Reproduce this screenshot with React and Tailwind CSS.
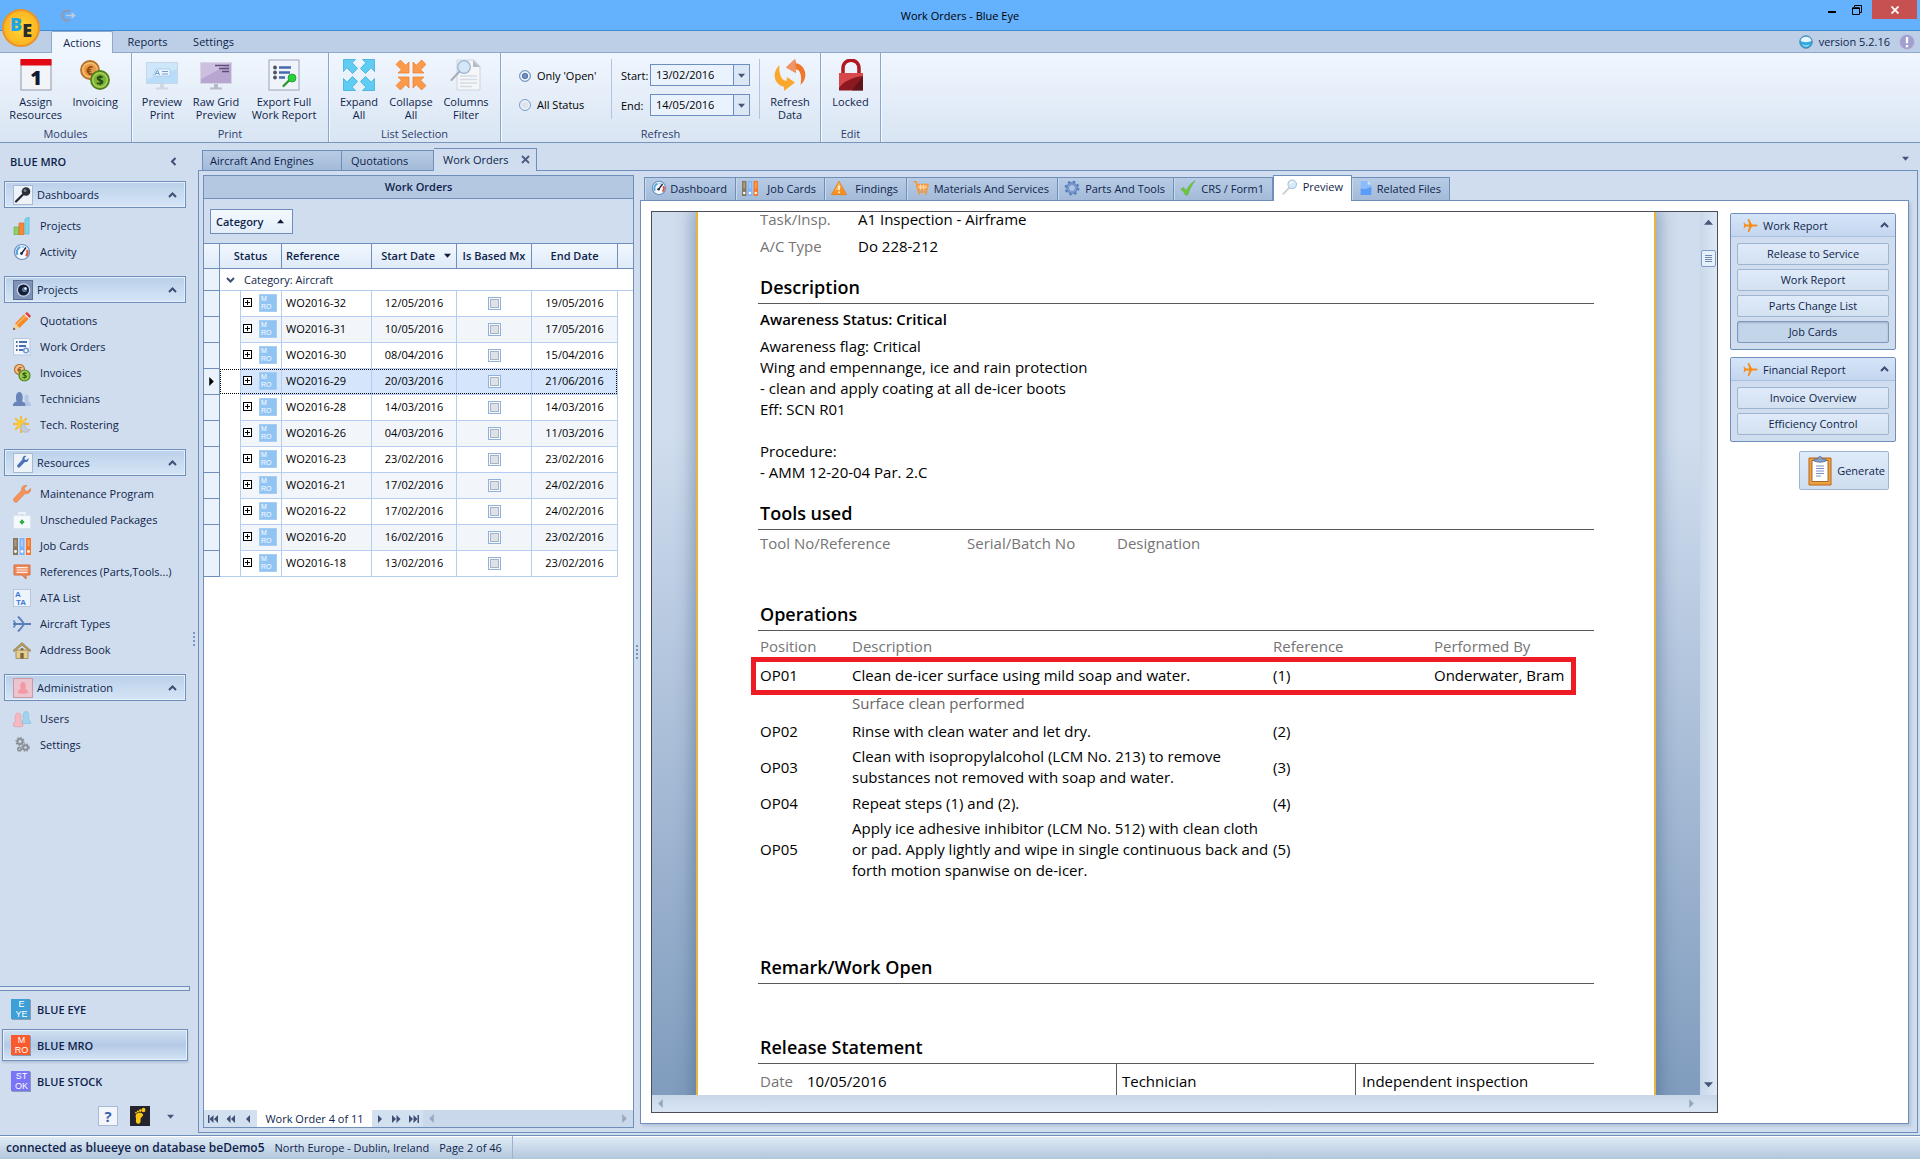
import React from "react";

/* ---------- small glyphs ---------- */

const ChevUp = () => (
  <svg width="9" height="6" viewBox="0 0 9 6" fill="none" stroke="#3f4f74" strokeWidth="2"><path d="M1 5l3.500-3.500L8 5" /></svg>
);
const ChevDown = () => (
  <svg width="9" height="6" viewBox="0 0 9 6" fill="none" stroke="#3f4f74" strokeWidth="2"><path d="M1 1l3.500 3.500L8 1" /></svg>
);
const ChevLeft = () => (
  <svg width="7" height="9" viewBox="0 0 7 9" fill="none" stroke="#3f4f74" strokeWidth="2"><path d="M5.500 1L2 4.500 5.500 8" /></svg>
);
const Tri = ({ dir = "down", color = "#46557a", size = 7 }) => {
  const d = { down: "M0 2h8L4 6.500z", up: "M0 6h8L4 1.500z", left: "M6 0v8L2 4z", right: "M2 0v8l4-4z" }[dir];
  return <svg width={size} height={size} viewBox="0 0 8 8"><path d={d} fill={color} /></svg>;
};

const Plane = ({ className }) => (
  <svg className={className} viewBox="0 0 16 16" fill="#f98b13">
    <path d="M15.500 8c0 .7-1 1.100-2 1.100h-4L6.500 15H5l1.600-5.900H3L1.500 11H.5l.8-3L.5 5h1L3 6.900h3.600L5 1h1.500l3 5.900h4c1 0 2 .4 2 1.100z" />
  </svg>
);

/* ---------- 18px icons ---------- */

const icons = {
  chart: (
    <g>
      <path d="M1 10h5v8H1z" fill="#8ed06a" stroke="#5cab3b" strokeWidth=".6" />
      <path d="M6 6h5v12H6z" fill="#f5873d" stroke="#d9661c" strokeWidth=".6" />
      <path d="M12 2l4-2v17h-4z" fill="#7fd6ea" stroke="#3fb0cc" strokeWidth=".6" />
    </g>
  ),
  gauge: (
    <g>
      <circle cx="9" cy="9" r="7.500" fill="#f7fbff" stroke="#6a8fc0" strokeWidth="1.200" />
      <path d="M4.500 12a5.500 5.500 0 0 1 3-8" fill="none" stroke="#5aa6dc" strokeWidth="2.200" />
      <path d="M8.500 3.700a5.500 5.500 0 0 1 3 .6" fill="none" stroke="#9fd0f0" strokeWidth="2" />
      <path d="M14 7a5.500 5.500 0 0 1-1 6" fill="none" stroke="#e0563d" strokeWidth="2.200" />
      <path d="M8.500 10.500L13 4.500" stroke="#222b40" strokeWidth="1.600" />
      <circle cx="8.500" cy="10.500" r="1.400" fill="#222b40" />
    </g>
  ),
  pencil: (
    <g>
      <path d="M2 11.500L11.500 2l4.500 4.500L6.500 16z" fill="#f68a24" />
      <path d="M3.500 13L13 3.500" stroke="#fbb56b" strokeWidth="1.500" />
      <path d="M12 1.500L14 0l4 4-1.500 2z" fill="#e2383c" />
      <path d="M11 2.500l1-1 4.500 4.500-1 1z" fill="#e8dcd0" />
      <path d="M2 11.500L0 18l6.500-2z" fill="#f3cf9b" />
      <path d="M.7 15.500L0 18l2.500-.8z" fill="#3a3a3a" />
    </g>
  ),
  orders: (
    <g>
      <rect x=".5" y=".5" width="16.500" height="16.500" fill="#f2f7fd" stroke="#b8c7db" />
      <path d="M3 4h1.500M3 8h1.500M3 12h1.500" stroke="#5b6478" strokeWidth="1.800" />
      <path d="M6 4h8M6 8h7M6 12h4" stroke="#4a6fae" strokeWidth="1.800" />
      <circle cx="13" cy="12.500" r="2.300" fill="#fff" stroke="#6d97d6" strokeWidth="1.500" />
    </g>
  ),
  coins: (
    <g>
      <circle cx="6.500" cy="5.500" r="5" fill="#f0c390" stroke="#b97432" strokeWidth="1.200" />
      <text x="6.500" y="8.500" fontSize="8" fontWeight="700" textAnchor="middle" fill="#a05a1c">€</text>
      <circle cx="11.500" cy="11.500" r="5.500" fill="#9ccb4c" stroke="#4f8222" strokeWidth="1.200" />
      <text x="11.500" y="14.800" fontSize="9" fontWeight="700" textAnchor="middle" fill="#2f5a12">$</text>
    </g>
  ),
  people: (
    <g>
      <path d="M10 16c0-3.500 1-3.800 2.300-4.500C11 9 11 4.500 13.500 4.500S16 9 15 11.500c1.500.7 3 1 3 4.500z" fill="#b3c6e6" />
      <path d="M0 16c0-3 1-3.500 3.700-4.500C2.500 9 2.500 2 6.300 2s4 7 2.700 9.500c2.500 1 3.500 1.500 3.500 4.500z" fill="#6a84b8" />
    </g>
  ),
  roster: (
    <g>
      <g stroke="#f5b921" strokeWidth="1.800"><path d="M8 0v3.500M8 12.500V17M0 8h4M2.300 2.300L5 5M2.300 13.700L5 11M13.700 2.300L11.500 4.500M12 8h4" /></g>
      <circle cx="8" cy="8" r="4.500" fill="#fdc93a" />
      <path d="M12.500 6.500c-1.500 3-.2 6.500 4.500 7.300-2.500 3.400-8 3.200-9.300-.8 0-2.800 1.800-6 4.800-6.500z" fill="#c4cbd8" stroke="#a1a9b8" strokeWidth=".6" />
    </g>
  ),
  wrench: (
    <path d="M17.500 3.500l-3 2.800-2.600-.6-.6-2.500L14 .4c-3-.8-6 1.600-5.400 5L1 13.500c-1.500 1.800 1 5 3.200 3.300l7.800-8.200c3.300.8 6.200-1.600 5.500-5.100z" fill="#f6935b" stroke="#dd7438" strokeWidth=".6" />
  ),
  aid: (
    <g>
      <path d="M6 4.500V2h6v2.500" fill="none" stroke="#eef2f7" strokeWidth="1.800" />
      <rect x=".5" y="4.500" width="17" height="13" rx="1" fill="#f5f8fc" stroke="#dbe3ee" />
      <path d="M9 8.800v4.400M6.800 11h4.400" stroke="#2bb04a" strokeWidth="2.200" />
    </g>
  ),
  cards: (
    <g>
      <path d="M0 1h5v17H0z" fill="#86775f" /><path d="M1.500 2.500h2v7h-2z" fill="#ab9c82" />
      <path d="M6.500 1h5v17h-5z" fill="#7fb3fa" /><path d="M8 2.500h2v7H8z" fill="#a8ccfd" />
      <path d="M13 1h5v17h-5z" fill="#f4782c" /><path d="M14.500 2.500h2v7h-2z" fill="#f9a25c" />
      <g fill="#fff"><circle cx="2.500" cy="14.500" r="1.400" /><circle cx="9" cy="14.500" r="1.400" /><circle cx="15.500" cy="14.500" r="1.400" /></g>
    </g>
  ),
  speech: (
    <g>
      <path d="M1 2h16v10h-4v4l-4-4H1z" fill="#ee8a5c" stroke="#d96d3c" />
      <path d="M3.500 4.700h11M3.500 7h11M3.500 9.300h11" stroke="#fdeee5" strokeWidth="1.200" />
    </g>
  ),
  ata: (
    <g>
      <rect x=".5" y=".5" width="17" height="17" fill="#eef4fb" stroke="#b8c7db" />
      <g fontSize="8" fontWeight="700" fill="#3b78d8" fontFamily="Liberation Sans, sans-serif"><text x="2" y="7.500">A</text><text x="3" y="16">TA</text></g>
    </g>
  ),
  jet: (
    <g fill="none" stroke="#5b7fbd">
      <path d="M0 9h18" strokeWidth="2" />
      <path d="M5 1.500c1 1 4.500 5 6 7.500-1.500 2.500-5 6.500-6 7.500" strokeWidth="1.800" />
      <path d="M.5 5.500L3 9 .5 12.500" strokeWidth="1.500" />
    </g>
  ),
  house: (
    <g>
      <path d="M3 9h12v8.500H3z" fill="#e3cd8f" stroke="#9b8350" strokeWidth=".8" />
      <path d="M0 9.500L9 1.500l9 8-1.200 1L9 4.200 1.200 10.500z" fill="#b79c5e" stroke="#8d7541" strokeWidth=".6" />
      <path d="M7.300 12h3.400v5.500H7.300z" fill="#7e6636" />
      <circle cx="9" cy="8.300" r="1.500" fill="#8d7541" />
    </g>
  ),
  users: (
    <g>
      <path d="M9 13.500c0-3 .8-3.500 2-4.500-1.500-2.500-1-7.500 2-7.500s3.500 5 2 7.500c1.700.8 2.500 1.500 2.500 4.500z" fill="#9fd3ee" stroke="#7bbbdc" strokeWidth=".6" />
      <path d="M.5 16c0-3 .8-3.800 2.300-4.800C1.300 8.500 2 3 5 3s4 5.500 2.500 8.200c1.700 1 2.500 1.800 2.500 4.800-2 1.200-7.500 1.200-9.500 0z" fill="#f6b9c0" stroke="#e295a0" strokeWidth=".6" />
    </g>
  ),
  gears: (
    <g fill="none" stroke="#8b8f96">
      <circle cx="7" cy="5.500" r="2.600" strokeWidth="2" /><circle cx="7" cy="5.500" r="4" strokeWidth="1.300" strokeDasharray="1.500 1.600" />
      <circle cx="6.500" cy="13" r="1.700" strokeWidth="1.700" />
      <circle cx="12.500" cy="11.500" r="2.300" strokeWidth="2" /><circle cx="12.500" cy="11.500" r="3.600" strokeWidth="1.300" strokeDasharray="1.500 1.400" />
    </g>
  ),
  warning: (
    <g>
      <path d="M9 1.500L17.500 16.500H.5z" fill="#f7901e" stroke="#e27a10" strokeWidth=".8" strokeLinejoin="round" />
      <path d="M9 2.500l3 6-8 4.500z" fill="#fbb25a" />
      <path d="M9 6.500v5M9 13v1.800" stroke="#fff4e0" strokeWidth="1.800" />
    </g>
  ),
  cart: (
    <g fill="none" stroke="#f3973a" strokeWidth="1.500">
      <path d="M.5 2h3l2.500 11.500h10.500" />
      <path d="M4.500 5H17l-1.300 6H5.700z" fill="#f7b268" />
      <path d="M6 8h10M8.500 5v6M12 5v6" stroke="#fde0bd" strokeWidth="1" />
      <path d="M6.500 15.800h1.500M13.500 15.800H15" strokeWidth="2.200" />
    </g>
  ),
  cog: (
    <g fill="none" stroke="#5578b8">
      <circle cx="9" cy="9" r="7" strokeWidth="2.600" strokeDasharray="2.700 2.800" />
      <circle cx="9" cy="9" r="4.800" strokeWidth="3.200" stroke="#7a9ad2" />
      <circle cx="9" cy="9" r="6" strokeWidth=".8" />
    </g>
  ),
  check: <path d="M1 10.500l3-2 3 3.500C9.500 7 13 3 17 .8 13.500 5 10.500 10.500 8.500 17h-2.300C5 14.500 3.300 12 1 10.500z" fill="#6fc63a" stroke="#4fa322" strokeWidth=".5" />,
  lens: (
    <g>
      <path d="M1.500 16.800L8.500 9.500" stroke="#c9cdd4" strokeWidth="2" strokeLinecap="round" />
      <circle cx="11.500" cy="6" r="4.800" fill="#d7ebf9" stroke="#a9c3dc" strokeWidth="1.200" />
      <path d="M9 5.500c.3-1.500 1.500-2.300 3-2.300" stroke="#fff" strokeWidth="1.200" fill="none" />
    </g>
  ),
  file: (
    <g>
      <path d="M3 1h8l4 4v12H3z" fill="#8cbcfb" />
      <path d="M11 1l4 4h-4z" fill="#d3e5fd" />
      <path d="M3 9.500l5 1 7-3V17H3z" fill="#5a9cf8" />
    </g>
  ),
  ball: (
    <g>
      <circle cx="9" cy="9" r="8" fill="#35a9dd" stroke="#3f6f9d" strokeWidth="1" />
      <path d="M2 7.500c1-7 13-7 14 0-3 2.500-11 2.500-14 0z" fill="#e4f5fc" />
      <path d="M4 12c2 4 8 4 10 0-3 1.500-7 1.500-10 0z" fill="#8fe3f7" />
    </g>
  ),
  bang: (
    <g>
      <circle cx="9" cy="9" r="8.500" fill="#a09fd0" stroke="#c3c6e2" />
      <path d="M9 3.500v7M9 12.500v2.500" stroke="#fff" strokeWidth="2.600" />
    </g>
  ),
};
const Icon = ({ name, className = "size-[18px]" }) => (
  <svg className={className + " shrink-0"} viewBox="0 0 18 18" aria-hidden="true">{icons[name]}</svg>
);

/* ---------- 20px framed icons for the navigation headings ---------- */

const Framed = ({ dark, pink, children }) => (
  <svg className="size-5 shrink-0" viewBox="0 0 20 20" aria-hidden="true">
    <rect x=".5" y=".5" width="19" height="19" fill={dark ? "#7f93b8" : pink ? "#edc3cd" : "#eef3fa"} stroke={dark ? "#5c6f93" : pink ? "#c898a6" : "#a9b9cf"} />
    {children}
  </svg>
);
const headIcons = {
  Dashboards: (
    <Framed>
      <path d="M3 16.500l7-7" stroke="#20242c" strokeWidth="2.200" strokeLinecap="round" />
      <circle cx="13" cy="6.500" r="4.300" fill="#2a2f3a" /><circle cx="12" cy="5.500" r="1.500" fill="#78808f" />
    </Framed>
  ),
  Projects: (
    <Framed dark>
      <circle cx="10.500" cy="10" r="6.800" fill="#c9d6ea" /><circle cx="10.500" cy="10" r="5.500" fill="#141d33" />
      <circle cx="11.500" cy="9.500" r="2.600" fill="#54709f" /><circle cx="12.500" cy="8.500" r="1.200" fill="#fff" />
    </Framed>
  ),
  Resources: (
    <Framed>
      <path d="M15.500 5l-2 2-1.700-.4-.4-1.700 2-1.900c-2.300-.6-4.400 1-4 3.600L4.500 12c-1.200 1.500.8 3.500 2.300 2.300l5.100-5.200c2.300.6 4.200-1.500 3.600-4.100z" fill="#4a72b8" />
    </Framed>
  ),
  Administration: (
    <Framed pink>
      <path d="M5 15c0-3 1.500-3.500 3-4.200C6.500 8.500 7 4 10 4s3.500 4.500 2 6.800c1.500.7 3 1.200 3 4.200-2.500 1-7.500 1-10 0z" fill="#f29aa4" />
    </Framed>
  ),
};

/* ---------- 32px ribbon icons ---------- */

const Arrows = ({ fill, stroke, inward }) => {
  const out = "M.5 .5h12l-3.300 3.300L14.500 9.500l-5 5-5.700-5.700L.5 12.500z";
  const inn = "M14 14H3l3.300-3.300L1 5.400 5.400 1l5.300 5.300L14 3z";
  const p = inward ? inn : out;
  return (
    <g fill={fill} stroke={stroke} strokeWidth=".7">
      <path d={p} /><path d={p} transform="translate(32 0) scale(-1 1)" />
      <path d={p} transform="translate(0 32) scale(1 -1)" /><path d={p} transform="translate(32 32) scale(-1 -1)" />
    </g>
  );
};
const big = {
  calendar: (
    <g>
      <rect x="1" y="1" width="30" height="30" fill="#f3f4f8" stroke="#8e97a8" />
      <path d="M.5 0h31v6.500H.500z" fill="#e30613" />
      <text x="16" y="25.500" fontSize="20" fontWeight="800" textAnchor="middle" fill="#111a2e">1</text>
    </g>
  ),
  coins: (
    <g>
      <circle cx="11" cy="11" r="9" fill="#f3bd6e" stroke="#b66f26" strokeWidth="1.800" />
      <circle cx="11" cy="11" r="6.300" fill="#e89a47" />
      <text x="10.500" y="15.500" fontSize="12" fontWeight="700" textAnchor="middle" fill="#8c4a12">€</text>
      <circle cx="21" cy="21" r="9" fill="#a8d052" stroke="#527f1e" strokeWidth="1.800" />
      <circle cx="21" cy="21" r="6.300" fill="#79b13a" />
      <text x="21" y="26" fontSize="13" fontWeight="700" textAnchor="middle" fill="#1f4a10">$</text>
    </g>
  ),
  preview: (
    <g>
      <rect x=".5" y="3.500" width="31" height="21" fill="#b9dcf8" stroke="#c6d7ea" />
      <path d="M1 4h30v6L1 20z" fill="#cfe7fb" />
      <path d="M7 17l3-7h14v7z" fill="#eef6fd" stroke="#a5c6e6" strokeWidth=".8" />
      <path d="M9 16l2.500-5 2 5M9.700 14.500h3.300M16 12.500h6M16 15h6" stroke="#6a9ed2" fill="none" />
      <path d="M14 25h4v3.500h-4zM10 28.500h12v2H10z" fill="#d3d6de" />
    </g>
  ),
  raw: (
    <g>
      <rect x=".5" y="3.500" width="31" height="21" fill="#b9a6d0" stroke="#d5d6e4" />
      <path d="M1 4h30L1 20z" fill="#cdbfe0" />
      <path d="M15 6.500h14M19 9.500h10M22 12.500h7" stroke="#5f4d78" strokeWidth="1.600" />
      <path d="M14 25h4v3.500h-4zM10 28.500h12v2H10z" fill="#b9bcc6" />
    </g>
  ),
  exportList: (
    <g>
      <rect x="1" y="1" width="30" height="30" fill="#f0f3f9" stroke="#99a5b8" />
      <g fill="#4c5264"><circle cx="7" cy="8.500" r="1.900" /><circle cx="7" cy="13.500" r="1.900" /><circle cx="7" cy="18.500" r="1.900" /></g>
      <path d="M11 8.500h12M11 13.500h11M11 18.500h6" stroke="#4669ad" strokeWidth="2.600" />
      <path d="M15.500 27l6-6" stroke="#23942b" strokeWidth="2.200" strokeLinecap="round" />
      <circle cx="24" cy="19" r="4" fill="#28d13a" stroke="#1a9a28" strokeWidth=".8" />
    </g>
  ),
  expand: <Arrows fill="#5fcdf3" stroke="#2ea6d6" />,
  collapse: <Arrows fill="#fb9a4b" stroke="#ec7a26" inward />,
  filter: (
    <g>
      <path d="M7 1h17l6 6v24H7z" fill="#f4f6f9" stroke="#cdd4de" />
      <path d="M23 1l7 7h-7z" fill="#b5bcc8" />
      <path d="M10 17h17M10 20.500h17M10 24h17M10 27.500h12" stroke="#d5dbe4" strokeWidth="1.400" />
      <circle cx="14" cy="8" r="6.300" fill="#d3e7f8" stroke="#9fb6cf" strokeWidth="1.300" />
      <path d="M9.500 12.500L1.500 21" stroke="#a9adb6" strokeWidth="2" strokeLinecap="round" />
    </g>
  ),
  refresh: (
    <g>
      <path d="M5.500 6C-1 12-1 21 5.500 26c1.500 1 3 1.500 4.500 1.700V32l11-8.500L13 18l-.5 4C7 21 4.500 14 5.500 6z" fill="#fba62c" />
      <path d="M26.500 26C33 20 33 11 26.500 6 25 5 23.500 4.500 22 4.300L21 0 12 8.500l10 5.500-.5-4c5.500 1 6.500 8 5 16z" fill="#f2762a" />
      <path d="M21 0l-9 8.500L22 14l-.2-4.200z" fill="#ee9468" />
    </g>
  ),
  lock: (
    <g>
      <path d="M8 15V9.500C8 -1.500 24 -1.500 24 9.500V15" fill="none" stroke="#b0171f" strokeWidth="3.500" />
      <path d="M4 14h24v17.500H4z" fill="#8d1920" />
      <path d="M4 14h24v3C17 18 8 23 4 29z" fill="#d8474b" />
      <path d="M17 31.500h11V17c-4 6-8 10-11 14.500z" fill="#4f1214" opacity=".7" />
    </g>
  ),
};
const BigIcon = ({ name }) => <svg className="size-8" viewBox="0 0 32 32" aria-hidden="true">{big[name]}</svg>;

/* ---------- ribbon ---------- */

const RibbonButton = ({ icon, lines, width }) => (
  <button className={"flex flex-col items-center gap-1 " + width}>
    <BigIcon name={icon} />
    <span className="block text-center">{lines.map((l) => <span className="block whitespace-nowrap" key={l}>{l}</span>)}</span>
  </button>
);
const RibbonGroup = ({ title, className, children }) => (
  <section className={"flex shrink-0 flex-col border-r border-[#8aa6cc] pt-[6px] shadow-[1px_0_0_#f5f9fe] " + className}>
    <div className="flex h-[68px] items-start">{children}</div>
    <h2 className="text-center text-[#2b3d6b]">{title}</h2>
  </section>
);
const Radio = ({ label, on }) => (
  <label className="flex items-center gap-[6px] whitespace-nowrap text-black">
    <input
      type="radio" name="status" defaultChecked={on}
      className="size-3 appearance-none rounded-full border border-[#7f9cc6] bg-[#dfe3e8] shadow-[inset_0_0_0_2px_#e6f0fb] checked:bg-[#7795c4] checked:shadow-[inset_0_0_0_2px_#e6f0fb,inset_0_0_0_3px_#4a6a9f]"
    />
    {label}
  </label>
);
const DateField = ({ id, label, value }) => (
  <div className="flex items-center">
    <label htmlFor={id} className="w-[29px] text-black">{label}</label>
    <div className="flex h-[22px] w-[100px] border border-[#6c8fc0] bg-[#eaf3fd]">
      <input id={id} defaultValue={value} className="w-0 flex-1 pb-[2px] pl-[5px] text-black outline-none" />
      <button aria-label={label + " calendar"} className="flex w-4 items-center justify-center border-l border-[#6c8fc0] bg-[#dbe7f5]"><Tri /></button>
    </div>
  </div>
);

function Ribbon() {
  return (
    <div className="flex h-[90px] border-b border-[#7794bd] bg-linear-to-b from-[#f0f6fe] to-[#d9e5f3] leading-[13px]">
      <RibbonGroup title="Modules" className="w-[132px] px-[6px]">
        <RibbonButton icon="calendar" lines={["Assign", "Resources"]} width="w-[60px]" />
        <RibbonButton icon="coins" lines={["Invoicing"]} width="w-[60px]" />
      </RibbonGroup>
      <RibbonGroup title="Print" className="w-[197px] px-[3px]">
        <RibbonButton icon="preview" lines={["Preview", "Print"]} width="w-[54px]" />
        <RibbonButton icon="raw" lines={["Raw Grid", "Preview"]} width="w-[54px]" />
        <RibbonButton icon="exportList" lines={["Export Full", "Work Report"]} width="w-[82px]" />
      </RibbonGroup>
      <RibbonGroup title="List Selection" className="w-[172px] px-1">
        <RibbonButton icon="expand" lines={["Expand", "All"]} width="w-[52px]" />
        <RibbonButton icon="collapse" lines={["Collapse", "All"]} width="w-[52px]" />
        <RibbonButton icon="filter" lines={["Columns", "Filter"]} width="w-[58px]" />
      </RibbonGroup>
      <RibbonGroup title="Refresh" className="w-[320px]">
        <div className="flex h-[60px] w-[111px] flex-col gap-4 border-r border-[#b3c5de] pt-[10px] pl-[18px]">
          <Radio label="Only 'Open'" on />
          <Radio label="All Status" />
        </div>
        <div className="flex h-[60px] w-[148px] flex-col gap-2 border-r border-[#b3c5de] pt-[5px] pl-[9px]">
          <DateField id="start" label="Start:" value="13/02/2016" />
          <DateField id="end" label="End:" value="14/05/2016" />
        </div>
        <RibbonButton icon="refresh" lines={["Refresh", "Data"]} width="w-[60px]" />
      </RibbonGroup>
      <RibbonGroup title="Edit" className="w-[60px]">
        <RibbonButton icon="lock" lines={["Locked"]} width="w-[59px]" />
      </RibbonGroup>
    </div>
  );
}

/* ---------- navigation ---------- */

const nav = [
  ["Dashboards", [["chart", "Projects"], ["gauge", "Activity"]]],
  ["Projects", [["pencil", "Quotations"], ["orders", "Work Orders"], ["coins", "Invoices"], ["people", "Technicians"], ["roster", "Tech. Rostering"]]],
  ["Resources", [["wrench", "Maintenance Program"], ["aid", "Unscheduled Packages"], ["cards", "Job Cards"], ["speech", "References (Parts,Tools...)"], ["ata", "ATA List"], ["jet", "Aircraft Types"], ["house", "Address Book"]]],
  ["Administration", [["users", "Users"], ["gears", "Settings"]]],
];

const ModuleTile = ({ a, b, color }) => (
  <span className={"flex h-5 w-[19px] flex-col pl-[2px] font-['Liberation_Sans',sans-serif] text-[9px] leading-[10px] font-normal text-white shadow-[1px_1px_0_#8a9bb5] " + color}>
    <span>{a}</span><span>{b}</span>
  </span>
);
const ModuleButton = ({ a, b, color, label, active }) => (
  <button className={"mx-[2px] flex h-8 items-center gap-[7px] border pl-2 font-semibold " + (active ? "border-[#6f8fba] bg-linear-to-b from-[#cfe0f2] via-[#b4cae5] to-[#d3e4f5] shadow-[inset_0_0_0_1px_#e6f1fb,0_2px_2px_#b4c4da]" : "border-transparent")}>
    <ModuleTile a={a} b={b} color={color} />{label}
  </button>
);

const Dots = () => (
  <div className="flex flex-col gap-[2px]">
    {[0, 1, 2, 3].map((i) => <span key={i} className="size-[2px] bg-[#7d95ba]" />)}
  </div>
);

function Sidebar() {
  return (
    <aside className="flex w-[190px] shrink-0 flex-col">
      <div className="flex h-[38px] items-center justify-between pr-[13px] pb-[2px] pl-[10px] font-semibold">
        BLUE MRO
        <button aria-label="Collapse navigation"><ChevLeft /></button>
      </div>
      <nav className="flex-1 overflow-hidden">
        {nav.map(([title, items]) => (
          <section key={title} className="pb-[11px]">
            <button className="ml-1 flex h-[27px] w-[182px] items-center gap-1 border border-[#6f8fba] bg-linear-to-b from-[#bad0e9] to-[#d5e5f6] pr-2 pl-2 shadow-[inset_0_0_0_1px_#e4effa]">
              {headIcons[title]}
              <span className="flex-1 text-left">{title}</span>
              <ChevUp />
            </button>
            <ul className="pt-[5px]">
              {items.map(([icon, label]) => (
                <li key={label}>
                  <a href="#" className="flex h-[26px] items-center gap-[9px] pl-[13px] whitespace-nowrap"><Icon name={icon} /><span className="pb-[2px]">{label}</span></a>
                </li>
              ))}
            </ul>
          </section>
        ))}
      </nav>
      <div className="h-[5px] border border-l-0 border-[#6f8fba] bg-[#dfeaf6]" />
      <div className="flex flex-col gap-1 pt-[2px]">
        <ModuleButton a="E" b="YE" color="bg-[#3d9fd6]" label="BLUE EYE" />
        <ModuleButton a="M" b="RO" color="bg-[#fb5a2c]" label="BLUE MRO" active />
        <ModuleButton a="ST" b="OK" color="bg-[#7a74f6]" label="BLUE STOCK" />
      </div>
      <div className="flex h-[38px] items-center gap-3 pl-[98px]">
        <button className="size-5 border border-[#a9b9cf] bg-[#f2f6fb] text-[15px] leading-[18px] font-bold text-[#3c5fb0]">?</button>
        <button aria-label="Footprint" className="size-5 bg-[#23242e]">
          <svg className="size-5" viewBox="0 0 20 20" fill="#fcc514"><path d="M6 8.500c1.500-2 6-2.500 7 0 .6 1.800-1.800 2.300-2.300 4-.4 1.800.6 4.500-1.700 5.200-2.500.6-3.600-1.700-3-4.200C6.300 12 5 10.300 6 8.500z" /><ellipse cx="13.500" cy="4" rx="1.900" ry="2.300" /><circle cx="10.300" cy="4.600" r="1.300" /><circle cx="7.900" cy="5.500" r="1.100" /><circle cx="6" cy="6.700" r=".9" /></svg>
        </button>
        <button aria-label="More" className="ml-[5px]"><Tri /></button>
      </div>
    </aside>
  );
}

/* ---------- work order list ---------- */

const orders = [
  ["WO2016-32", "12/05/2016", "19/05/2016"],
  ["WO2016-31", "10/05/2016", "17/05/2016"],
  ["WO2016-30", "08/04/2016", "15/04/2016"],
  ["WO2016-29", "20/03/2016", "21/06/2016"],
  ["WO2016-28", "14/03/2016", "14/03/2016"],
  ["WO2016-26", "04/03/2016", "11/03/2016"],
  ["WO2016-23", "23/02/2016", "23/02/2016"],
  ["WO2016-21", "17/02/2016", "24/02/2016"],
  ["WO2016-22", "17/02/2016", "24/02/2016"],
  ["WO2016-20", "16/02/2016", "23/02/2016"],
  ["WO2016-18", "13/02/2016", "23/02/2016"],
];
const CURRENT = 3;

const Nav = ({ double, bar }) => (
  <svg width="10" height="8" viewBox="0 0 10 8" fill="#3f4f74">
    {bar && <path d="M0 0h1.500v8H0z" />}
    {double ? <path d="M5.500 0v8L1.500 4zM10 0v8L6 4z" /> : <path d="M7 0v8L3 4z" />}
  </svg>
);

function OrderList() {
  const th = "border-r border-b border-[#6f8fba] bg-linear-to-b from-[#f1f7fe] to-[#dfebf8] pb-[2px] font-semibold";
  const td = "border-r border-b border-[#b5cdee] pb-[2px] text-black";
  const ind = "border-r border-b border-[#6f8fba] bg-[#eaf2fb]";
  return (
    <section className="flex w-[431px] shrink-0 flex-col border border-[#6f8fba] bg-white">
      <h2 className="flex h-[23px] items-center justify-center border-b border-[#6f8fba] bg-[#b4c8e1] pb-[2px] font-semibold">Work Orders</h2>
      <div className="flex h-[45px] items-center border-b border-[#6f8fba] bg-[#d0ddee] pl-[6px]">
        <button className="flex h-[25px] w-[83px] items-center justify-between border border-[#6f8fba] bg-linear-to-b from-[#f4f9ff] to-[#e2edf9] pr-2 pl-[5px] font-semibold">
          Category <Tri dir="up" color="#0f1a33" />
        </button>
      </div>
      <div className="flex-1 overflow-hidden">
        <table className="w-full table-fixed border-separate border-spacing-0">
          <colgroup>
            <col className="w-4" /><col className="w-[21px]" /><col className="w-[41px]" /><col className="w-[90px]" />
            <col className="w-[85px]" /><col className="w-[75px]" /><col className="w-[86px]" /><col />
          </colgroup>
          <thead>
            <tr className="h-[25px]">
              <th className={th} />
              <th colSpan={2} className={th}>Status</th>
              <th className={th + " pl-1 text-left"}>Reference</th>
              <th className={th}>
                <span className="flex items-center justify-end gap-[9px] pr-[5px]">Start Date <Tri color="#0f1a33" /></span>
              </th>
              <th className={th + " whitespace-nowrap"}>Is Based Mx</th>
              <th className={th}>End Date</th>
              <th className="border-b border-[#6f8fba] bg-linear-to-b from-[#f1f7fe] to-[#dfebf8]" />
            </tr>
          </thead>
          <tbody>
            <tr className="h-[22px]">
              <td className={ind} />
              <td colSpan={7} className="border-b border-[#b5cdee]">
                <span className="flex items-center gap-[9px] pl-[6px]"><ChevDown />Category: Aircraft</span>
              </td>
            </tr>
            {orders.map(([ref, start, end], i) => {
              const bg = i === CURRENT ? " bg-[#d5e6fc]" : i % 2 ? " bg-[#f2f6fb]" : "";
              const last = i === orders.length - 1;
              return (
                <tr key={ref} className="h-[26px]">
                  <td className={ind}>{i === CURRENT && <span className="flex justify-center"><Tri dir="right" color="#000" size={9} /></span>}</td>
                  <td className={"relative border-r border-[#b5cdee]" + (last ? " border-b" : "")}>
                    {i === CURRENT && <span className="pointer-events-none absolute top-0 left-0 z-10 h-[25px] w-[397px] border border-dotted border-black" />}
                  </td>
                  <td className={td + bg}>
                    <span className="flex items-center gap-2 pl-[2px]">
                      <button aria-label={"Expand " + ref} className="flex size-[9px] items-center justify-center border border-black bg-white">
                        <svg width="5" height="5" viewBox="0 0 5 5"><path d="M2 0h1v5H2zM0 2h5v1H0z" /></svg>
                      </button>
                      <span className="grid size-4 grid-rows-2 bg-[#8fc4f3] pl-px font-['Liberation_Sans',sans-serif] text-[7px] leading-[8px] text-white shadow-[0_0_0_1px_#a9cdef]">
                        <span className="h-2">M</span><span className="h-2">RO</span>
                      </span>
                    </span>
                  </td>
                  <td className={td + bg + " pl-1"}>{ref}</td>
                  <td className={td + bg + " text-center"}>{start}</td>
                  <td className={td + bg}>
                    <input
                      type="checkbox" aria-label={ref + " is based maintenance"}
                      className="mx-auto mt-px block size-[13px] appearance-none border border-[#8fb1db] bg-[#dde2e9] shadow-[inset_0_0_0_1px_#f6fafe,inset_0_0_0_2px_#a9b3c1]"
                    />
                  </td>
                  <td className={td + bg + " text-center"}>{end}</td>
                  <td />
                </tr>
              );
            })}
          </tbody>
        </table>
      </div>
      <div className="flex h-[17px] bg-[#d3e0f0]">
        <div className="flex w-[53px] items-center justify-around">
          <button aria-label="First"><Nav double bar /></button>
          <button aria-label="Page back"><Nav double /></button>
          <button aria-label="Previous"><Nav /></button>
        </div>
        <div className="flex w-[115px] items-center justify-center bg-white whitespace-nowrap">Work Order 4 of 11</div>
        <div className="flex w-[51px] -scale-x-100 items-center justify-around">
          <button aria-label="Last"><Nav double bar /></button>
          <button aria-label="Page forward"><Nav double /></button>
          <button aria-label="Next"><Nav /></button>
        </div>
        <div className="flex flex-1 items-center justify-between bg-[#c9d8ea] px-1">
          <Tri dir="left" color="#97a8c4" size={9} /><Tri dir="right" color="#97a8c4" size={9} />
        </div>
      </div>
    </section>
  );
}

/* ---------- report page ---------- */

const Section = ({ children, className }) => (
  <h2 className={"border-b border-[#595959] px-[2px] pb-[5px] text-[18px] leading-[22px] font-semibold " + className}>{children}</h2>
);
const operations = [
  ["OP01", ["Clean de-icer surface using mild soap and water."], "(1)", "Onderwater, Bram"],
  ["", ["Surface clean performed"], "", ""],
  ["OP02", ["Rinse with clean water and let dry."], "(2)", ""],
  ["OP03", ["Clean with isopropylalcohol (LCM No. 213) to remove", "substances not removed with soap and water."], "(3)", ""],
  ["OP04", ["Repeat steps (1) and (2)."], "(4)", ""],
  ["OP05", ["Apply ice adhesive inhibitor (LCM No. 512) with clean cloth", "or pad. Apply lightly and wipe in single continuous back and", "forth motion spanwise on de-icer."], "(5)", ""],
];

function Report() {
  return (
    <article className="mx-11 flex-1 self-start border-x-2 border-[#e9b53c] bg-white px-[60px] pb-8 text-[15px] leading-[21px] text-black shadow-[0_0_16px_4px_rgba(60,90,130,0.45)]">
      <dl className="grid grid-cols-[98px_1fr] gap-y-3 px-[2px] leading-[15px]">
        <dt className="text-[#757575]">Task/Insp.</dt><dd>A1 Inspection - Airframe</dd>
        <dt className="text-[#757575]">A/C Type</dt><dd>Do 228-212</dd>
      </dl>
      <Section className="mt-[22px]">Description</Section>
      <p className="mt-[5px] px-[2px] font-semibold">Awareness Status: Critical</p>
      <p className="mt-[6px] px-[2px]">
        Awareness flag: Critical<br />Wing and empennange, ice and rain protection<br />- clean and apply coating at all de-icer boots<br />
        Eff: SCN R01<br /><br />Procedure:<br />- AMM 12-20-04 Par. 2.C
      </p>
      <Section className="mt-[19px]">Tools used</Section>
      <div className="mt-[3px] grid grid-cols-[207px_150px_1fr] px-[2px] text-[#757575]">
        <span>Tool No/Reference</span><span>Serial/Batch No</span><span>Designation</span>
      </div>
      <Section className="mt-[49px]">Operations</Section>
      <div className="relative">
        <table className="w-full table-fixed">
          <colgroup><col className="w-[94px]" /><col className="w-[421px]" /><col className="w-[161px]" /><col /></colgroup>
          <thead>
            <tr className="h-[30px] text-left text-[#757575]">
              <th className="pl-[2px] font-normal">Position</th><th className="font-normal">Description</th>
              <th className="font-normal">Reference</th><th className="font-normal">Performed By</th>
            </tr>
          </thead>
          <tbody>
            {operations.map(([pos, text, ref, by], i) => (
              <tr key={i} className="h-7">
                <td className="pl-[2px]">{pos}</td>
                <td className={"whitespace-nowrap " + (pos ? "" : "text-[#666] ") + (text.length > 1 ? "py-px" : "")}>
                  {text.map((l) => <span className="block" key={l}>{l}</span>)}
                </td>
                <td>{ref}</td><td className="whitespace-nowrap">{by}</td>
              </tr>
            ))}
          </tbody>
        </table>
        <span className="pointer-events-none absolute top-[26px] right-[18px] -left-[7px] h-[38px] border-[5px] border-[#ed1c24]" />
      </div>
      <Section className="mt-[74px]">Remark/Work Open</Section>
      <Section className="mt-[52px]">Release Statement</Section>
      <div className="grid h-10 grid-cols-[358px_239px_1fr] leading-[34px]">
        <div className="flex gap-[14px] pl-[2px]"><span className="text-[#757575]">Date</span><span>10/05/2016</span></div>
        <div className="border-l border-[#595959] pl-[5px]">Technician</div>
        <div className="border-l border-[#595959] pl-[6px]">Independent inspection</div>
      </div>
    </article>
  );
}

function Viewer() {
  return (
    <div className="flex min-w-0 flex-1 flex-col border border-[#4b4f57]">
      <div className="flex min-h-0 flex-1">
        <div className="flex flex-1 overflow-hidden bg-linear-to-b from-[#d0ddee] from-25% to-[#809cbe]"><Report /></div>
        <div className="flex w-[17px] flex-col items-center bg-linear-to-r from-[#c9d8ea] to-[#dde8f5] py-[6px]">
          <Tri dir="up" size={9} />
          <span className="mt-[23px] flex h-[17px] w-[15px] flex-col items-center justify-center gap-px rounded-[2px] border border-[#7d9cc8] bg-[#e6f0fb]">
            {[0, 1, 2, 3].map((i) => <span key={i} className="h-px w-[7px] bg-[#7088b0]" />)}
          </span>
          <span className="mt-auto flex"><Tri dir="down" size={9} /></span>
        </div>
      </div>
      <div className="flex h-[17px] items-center justify-between bg-linear-to-b from-[#c8d7e9] to-[#d9e5f3] pr-[21px] pl-[4px]">
        <Tri dir="left" color="#94a6c3" size={9} /><Tri dir="right" color="#94a6c3" size={9} />
      </div>
    </div>
  );
}

const GroupBox = ({ title, items, active }) => (
  <section className="rounded-[2px] border border-[#6f8fba] bg-[#d0ddee]">
    <h3 className="flex h-[23px] items-center gap-[5px] border-b border-[#a9c0e0] bg-linear-to-b from-[#d6e5f8] to-[#c3d6ef] pr-[6px] pl-3">
      <Plane className="size-[15px]" /><span className="flex-1">{title}</span><ChevUp />
    </h3>
    <div className="flex flex-col gap-1 px-[6px] py-[6px]">
      {items.map((t) => (
        <button key={t} className={"h-[22px] rounded-[2px] border pb-[2px] " + (t === active ? "border-[#7f99bd] bg-[#c3d5e9] shadow-[inset_0_1px_2px_#9db2cf]" : "border-[#9fb4d3] bg-linear-to-b from-[#dfebf9] to-[#d3e1f1]")}>{t}</button>
      ))}
    </div>
  </section>
);

const detailTabs = [
  ["gauge", "Dashboard", "w-[92px]"], ["cards", "Job Cards", "w-[89px]"], ["warning", "Findings", "w-[82px]"],
  ["cart", "Materials And Services", "w-[151px]"], ["cog", "Parts And Tools", "w-[116px]"], ["check", "CRS / Form1", "w-[99px]"],
  ["lens", "Preview", "w-[79px]"], ["file", "Related Files", "w-[98px]"],
];

function Details() {
  return (
    <section className="flex min-w-0 flex-1 flex-col pr-2 pb-1">
      <div role="tablist" className="flex h-[25px] shrink-0 items-end pl-1">
        {detailTabs.map(([icon, label, w]) =>
          label === "Preview" ? (
            <button key={label} role="tab" aria-selected="true" className={"z-10 -mb-px flex h-[26px] items-center justify-between border border-b-0 border-[#6f8fba] bg-white pr-2 pb-1 pl-2 whitespace-nowrap " + w}>
              <Icon name={icon} className="size-4" />{label}
            </button>
          ) : (
            <button key={label} role="tab" aria-selected="false" className={"flex h-[23px] items-center justify-between border-t border-r border-[#6f8fba] bg-linear-to-b from-[#b7cbe4] to-[#a3bbd9] pr-2 pb-[2px] pl-[6px] whitespace-nowrap shadow-[inset_1px_0_0_#c9d9ed] first:border-l " + w}>
              <Icon name={icon} className="size-4" />{label}
            </button>
          )
        )}
      </div>
      <div className="flex min-h-0 flex-1 gap-3 border border-[#6f8fba] bg-white pt-[10px] pr-3 pb-[10px] pl-[10px] shadow-[2px_2px_3px_#b2c1d7]">
        <Viewer />
        <div className="flex w-[166px] flex-col gap-[7px] pt-[2px]">
          <GroupBox title="Work Report" items={["Release to Service", "Work Report", "Parts Change List", "Job Cards"]} active="Job Cards" />
          <GroupBox title="Financial Report" items={["Invoice Overview", "Efficiency Control"]} />
          <button className="mt-[2px] mr-[7px] flex h-[39px] w-[90px] items-center justify-between self-end rounded-[2px] border border-[#9fb4d3] bg-linear-to-b from-[#dfebf9] to-[#cfdef0] pr-[3px] pl-[8px]">
            <svg width="24" height="30" viewBox="0 0 24 30" aria-hidden="true">
              <path d="M1 2h22v27H1z" fill="#f0a33c" stroke="#b8631b" />
              <path d="M4 4.500h16v21H4z" fill="#fff" stroke="#8a4d1c" strokeWidth=".8" />
              <path d="M6 5V3h4c0-3.500 4-3.500 4 0h4v2c-3 1.500-9 1.500-12 0z" fill="#8ba0c6" stroke="#51678f" strokeWidth=".8" />
              <path d="M8 10h8M8 12.500h8M8 15h8M8 17.500h8M8 20h5" stroke="#7b8cc4" />
            </svg>
            Generate
          </button>
        </div>
      </div>
    </section>
  );
}

/* ---------- window ---------- */

function TitleBar() {
  return (
    <>
      <header className="grid h-[31px] grid-cols-[1fr_auto_1fr] border-b border-[#3f8bd6] bg-[#64b1fd] text-black">
        <div className="flex items-center pl-[59px]">
          <svg width="17" height="15" viewBox="0 0 17 15" fill="none" stroke="#8d9cb4" strokeWidth="2.400" aria-hidden="true"><path d="M11 3.500a5 5 0 1 0 0 8.200" /><path d="M7 7.500h8M12.500 5l3 2.500-3 2.500" strokeWidth="1.600" stroke="#c3ccda" /></svg>
        </div>
        <h1 className="flex items-center">Work Orders - Blue Eye</h1>
        <div className="flex items-start justify-end pr-[3px]">
          <button aria-label="Minimise" className="flex h-[19px] w-7 items-end justify-center pb-[6px]"><span className="h-[2px] w-2 bg-black" /></button>
          <button aria-label="Restore" className="flex h-[19px] w-[26px] items-center justify-start pl-[6px] pr-[10px]">
            <svg width="10" height="10" viewBox="0 0 10 10" fill="none" stroke="#000"><path d="M2.500 2V.5h7v7H8" /><path d="M.5 3h7v6.500h-7z" /><path d="M.5 3.200h7" strokeWidth="1.600" /></svg>
          </button>
          <button aria-label="Close" className="flex h-[19px] w-[45px] items-center justify-center bg-[#c75050]">
            <svg width="8" height="8" viewBox="0 0 8 8" stroke="#fff" strokeWidth="1.800"><path d="M.5.5l7 7M7.500.5l-7 7" /></svg>
          </button>
        </div>
      </header>
      <button aria-label="Blue Eye menu" className="absolute top-[9px] left-[2px] z-20 flex size-[38px] items-center justify-center rounded-full border-2 border-[#e9952a] bg-radial from-[#ffd83a] to-[#fba50f] text-[18px] leading-[19px] font-extrabold">
        <span className="-mt-2 text-[#1ca5e8]">B</span><span className="mt-1 text-[#2b2b2b]">E</span>
      </button>
    </>
  );
}

export default function App() {
  return (
    <div className="relative flex h-screen flex-col overflow-hidden bg-[#d0ddee] font-['Open_Sans','Noto_Sans',sans-serif] text-[11px] leading-[15px] text-[#0f1f4b]">
      <TitleBar />
      <div className="flex h-[22px] items-stretch border-b border-[#8ea8cd] bg-[#bccfe7] pr-[5px] pl-[51px]">
        <button className="z-10 -mb-px w-[62px] rounded-t-[2px] border border-b-0 border-[#8ea8cd] bg-[#f0f6fe]">Actions</button>
        <button className="w-[69px]">Reports</button>
        <button className="w-[63px]">Settings</button>
        <div className="ml-auto flex items-center gap-[6px]">
          <Icon name="ball" className="size-[14px]" />version 5.2.16<Icon name="bang" className="ml-[3px] size-4" />
        </div>
      </div>
      <Ribbon />
      <div className="flex min-h-0 flex-1">
        <Sidebar />
        <div className="flex w-2 items-center justify-center"><Dots /></div>
        <main className="flex min-w-0 flex-1 flex-col pr-[2px] pb-[2px]">
          <div role="tablist" className="flex h-[27px] shrink-0 items-end pr-[9px] pl-1">
            <button role="tab" aria-selected="false" className="h-5 w-[140px] border border-b-0 border-[#6f8fba] bg-linear-to-b from-[#b7cbe4] to-[#a3bbd9] pl-[7px] text-left">Aircraft And Engines</button>
            <button role="tab" aria-selected="false" className="h-5 w-[92px] border-t border-r border-[#6f8fba] bg-linear-to-b from-[#b7cbe4] to-[#a3bbd9] pl-[9px] text-left">Quotations</button>
            <div className="z-10 -mb-px flex h-[23px] w-[103px] items-center justify-between border border-b-0 border-l-0 border-[#6f8fba] bg-[#d0ddee] pr-[6px] pb-[2px] pl-[9px]">
              <button role="tab" aria-selected="true">Work Orders</button>
              <button aria-label="Close tab"><svg width="9" height="9" viewBox="0 0 9 9" stroke="#4b5c84" strokeWidth="1.800"><path d="M1 1l7 7M8 1L1 8" /></svg></button>
            </div>
            <button aria-label="Tab list" className="mb-2 ml-auto"><Tri /></button>
          </div>
          <div className="flex min-h-0 flex-1 border border-[#6f8fba] p-1 pr-0">
            <OrderList />
            <div className="flex w-[6px] items-center justify-center"><Dots /></div>
            <Details />
          </div>
        </main>
      </div>
      <footer className="flex h-6 items-center gap-[10px] border-t border-[#6f8fba] bg-linear-to-b from-[#e2edf7] to-[#b2c6dc] pl-[6px] shadow-[inset_0_1px_0_#fff]">
        <span className="text-[12px] font-semibold">connected as blueeye on database beDemo5</span>
        <span>North Europe - Dublin, Ireland</span>
        <span>Page 2 of 46</span>
        <span className="h-full w-px bg-[#9db1cc]" />
      </footer>
    </div>
  );
}
